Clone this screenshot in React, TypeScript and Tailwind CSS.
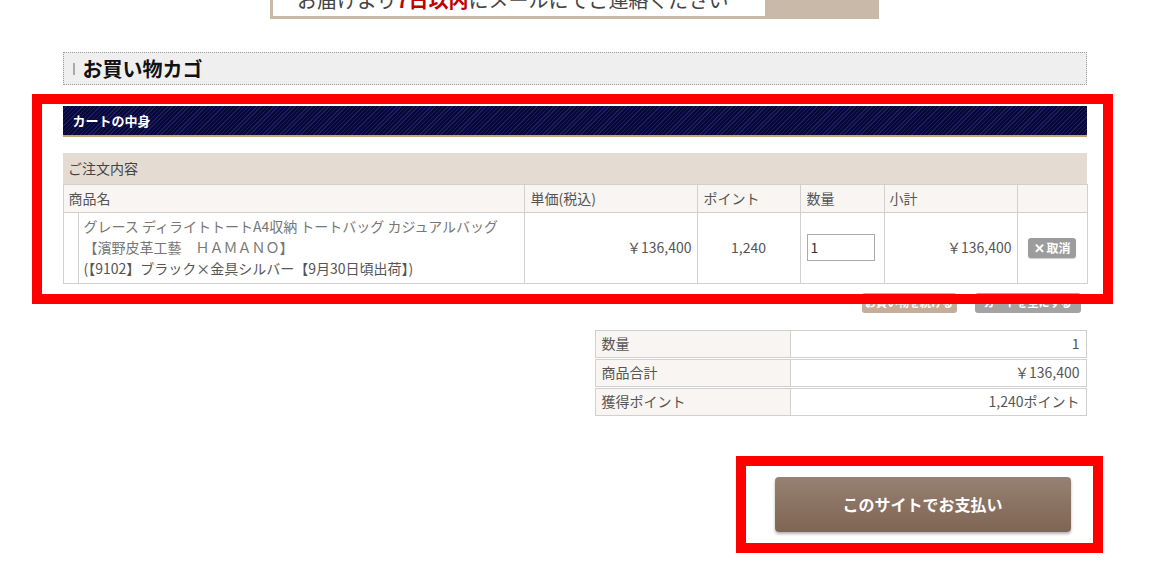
import React from "react";

const F = { fontFamily: '"Noto Sans CJK JP", "Noto Sans", sans-serif' };

export default function App() {
  return (
    <div
      className="relative w-[1149px] min-h-[566px] bg-white overflow-hidden text-[#555]"
      style={F}
    >
      {/* top notice banner (cut off) */}
      <div className="mx-auto w-[609px] h-[19px] bg-[#c9b9a8] overflow-hidden pl-[3px] pb-[3px]">
        <div className="w-[492px] h-[16px] bg-white overflow-hidden">
          <div className="-mt-[15px] pl-[24px] text-[20px] leading-[30px] text-[#444] whitespace-nowrap">
            お届けより<span className="text-[#c00000] font-bold">7日以内</span>にメールにてご連絡ください
          </div>
        </div>
      </div>

      <div className="mx-auto w-[1024px]">
        {/* heading */}
        <div className="mt-[33px] h-[33px] border border-dotted border-[#999] bg-[#efefef] flex items-center pl-[9px]">
          <span className="w-[2px] h-[12px] bg-[#aaa] mr-[8px]" />
          <span className="text-[20px] font-bold text-[#111] leading-none">お買い物カゴ</span>
        </div>

        {/* cart header */}
        <div className="mt-[21px] h-[31px] border-b-2 border-[#c9a074] bg-[repeating-linear-gradient(135deg,#07073a_0px,#07073a_2px,#1d1d5e_2px,#1d1d5e_3px)] flex items-center pl-[10px]">
          <span className="text-[13px] font-bold text-white">カートの中身</span>
        </div>

        {/* cart table */}
        <table className="mt-[16px] w-[1024px] border-collapse table-fixed text-[14px]">
          <colgroup>
            <col className="w-[15px]" />
            <col className="w-[446px]" />
            <col className="w-[173px]" />
            <col className="w-[103px]" />
            <col className="w-[84px]" />
            <col className="w-[133px]" />
            <col className="w-[70px]" />
          </colgroup>
          <tbody>
            <tr className="h-[31px] bg-[#e4dcd3]">
              <td colSpan={7} className="pl-[5px] text-[#444]">
                ご注文内容
              </td>
            </tr>
            <tr className="h-[28px] bg-[#f8f5f2]">
              <td colSpan={2} className="border border-[#d0d0d0] pl-[5px]">商品名</td>
              <td className="border border-[#d0d0d0] pl-[6px]">単価(税込)</td>
              <td className="border border-[#d0d0d0] pl-[6px]">ポイント</td>
              <td className="border border-[#d0d0d0] pl-[6px]">数量</td>
              <td className="border border-[#d0d0d0] pl-[5px]">小計</td>
              <td className="border border-[#d0d0d0]"></td>
            </tr>
            <tr className="h-[71px]">
              <td className="border border-[#d0d0d0]"></td>
              <td className="border border-[#d0d0d0] pl-[5px] text-[#777] leading-[21px]">
                <div>グレース ディライトトートA4収納 トートバッグ カジュアルバッグ</div>
                <div>【濱野皮革工藝　ＨＡＭＡＮＯ】</div>
                <div className="text-[#555]">(【9102】ブラック×金具シルバー【9月30日頃出荷】)</div>
              </td>
              <td className="border border-[#d0d0d0] text-right pr-[5px]">￥136,400</td>
              <td className="border border-[#d0d0d0] text-center">1,240</td>
              <td className="border border-[#d0d0d0] pl-[6px]">
                <div className="w-[68px] h-[27px] border border-[#aaa] flex items-center pl-[3px] text-[#333]">1</div>
              </td>
              <td className="border border-[#d0d0d0] text-right pr-[5px]">￥136,400</td>
              <td className="border border-[#d0d0d0]">
                <div className="mx-auto w-[48px] h-[20px] rounded-[3px] bg-[#9c9c9c] text-white text-[12px] font-bold flex items-center justify-center leading-none shadow-[0_1px_1px_rgba(0,0,0,0.2)]">
                  <span className="text-[13px] mr-[2px]">✕</span>取消
                </div>
              </td>
            </tr>
          </tbody>
        </table>

        {/* small buttons */}
        <div className="mt-[9px] flex justify-end gap-[18px] pr-[6px]">
          <div className="w-[95px] h-[20px] rounded-[3px] bg-[#c5ad9b] text-white text-[11px] font-bold flex items-center justify-center">
            お買い物を続ける
          </div>
          <div className="w-[106px] h-[20px] rounded-[3px] bg-[#a3a3a3] text-white text-[11px] font-bold flex items-center justify-center">
            カートを空にする
          </div>
        </div>

        {/* summary */}
        <div className="mt-[16px] flex justify-end">
          <table className="w-[492px] border-separate border-spacing-x-0 border-spacing-y-[1px] text-[14px]">
            <tbody>
              <tr className="h-[28px]">
                <td className="w-[196px] bg-[#f8f5f2] border border-[#d0d0d0] pl-[6px]">数量</td>
                <td className="border-y border-r border-[#d0d0d0] text-right pr-[6px]">1</td>
              </tr>
              <tr className="h-[28px]">
                <td className="bg-[#f8f5f2] border border-[#d0d0d0] pl-[6px]">商品合計</td>
                <td className="border-y border-r border-[#d0d0d0] text-right pr-[6px]">￥136,400</td>
              </tr>
              <tr className="h-[28px]">
                <td className="bg-[#f8f5f2] border border-[#d0d0d0] pl-[6px]">獲得ポイント</td>
                <td className="border-y border-r border-[#d0d0d0] text-right pr-[6px]">1,240ポイント</td>
              </tr>
            </tbody>
          </table>
        </div>

        {/* pay button */}
        <div className="mt-[60px] flex justify-end pr-[16px]">
          <div className="w-[296px] h-[55px] rounded-[4px] bg-gradient-to-b from-[#968172] to-[#7f6553] shadow-[0_2px_3px_rgba(0,0,0,0.3)] flex items-center justify-center text-white text-[16px] font-bold">
            このサイトでお支払い
          </div>
        </div>
      </div>

      {/* annotation frames */}
      <div className="absolute left-[32px] top-[94px] w-[1081px] h-[210px] border-[10px] border-[#ff0000]" />
      <div className="absolute left-[736px] top-[456px] w-[367px] h-[97px] border-[10px] border-[#ff0000]" />
    </div>
  );
}
